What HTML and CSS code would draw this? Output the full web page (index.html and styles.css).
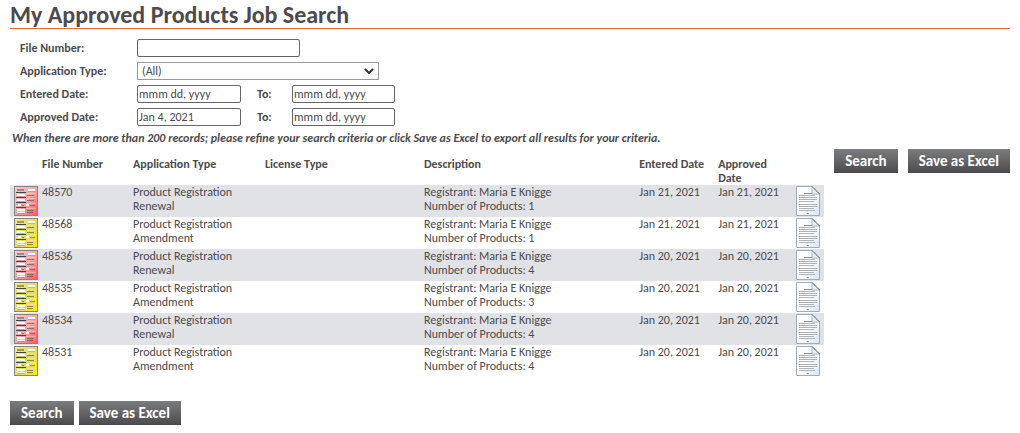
FILE: index.html
```
<!DOCTYPE html>
<html lang="en">
<head>
<meta charset="utf-8">
<title>My Approved Products Job Search</title>
<link rel="stylesheet" href="styles.css">
</head>
<body>
<svg class="defs" aria-hidden="true">
  <defs>
    <linearGradient id="red" x1="0" y1="0" x2="1" y2="1"><stop offset="0" stop-color="#f8c8c8"/><stop offset=".5" stop-color="#f0a8a8"/><stop offset="1" stop-color="#fb5c62"/></linearGradient>
    <linearGradient id="yellow" x1="0" y1="0" x2="1" y2="1"><stop offset="0" stop-color="#eeee7c"/><stop offset=".5" stop-color="#e2dc68"/><stop offset="1" stop-color="#fbe51c"/></linearGradient>
    <linearGradient id="paper" x1="0" y1="0" x2="1" y2="1"><stop offset=".5" stop-color="#fff"/><stop offset="1" stop-color="#d3e4f5"/></linearGradient>
    <symbol id="form-lines" viewBox="0 0 24 30">
      <path d="M14 4h7M3 9h8M3 14h8M4 19h3M12 19h3" stroke="#fff" stroke-width="2"/>
      <path d="M3 25h8" stroke="#fff" stroke-width="4"/>
      <path d="M14 5.500h7M3 10.500h8M3 15.500h8M3 25.500h8M3 27.500h8" stroke="#777" stroke-opacity=".35"/>
      <path d="M2 6.500h10M2 11.500h10M2 16.500h10M2 21.500h10" stroke="#222" stroke-opacity=".8"/>
      <path d="M3 4h7" stroke="#554a40" stroke-opacity=".5" stroke-width="2"/>
      <path d="M13 9.500h7M13 14.500h7M8 19.500h2M16 19.500h5M13 24.500h6M13 26.500h6" stroke="#554a40" stroke-opacity=".6"/>
      <path d="M13 7.500h9M13 12.500h9M13 17.500h9M13 22.500h9" stroke="#fff" stroke-opacity=".3"/>
    </symbol>
    <symbol id="renewal" viewBox="0 0 24 30"><rect x=".5" y=".5" width="23" height="29" fill="url(#red)" stroke="#858585"/><use href="#form-lines"/></symbol>
    <symbol id="amendment" viewBox="0 0 24 30"><rect x=".5" y=".5" width="23" height="29" fill="url(#yellow)" stroke="#858585"/><use href="#form-lines"/></symbol>
    <symbol id="document" viewBox="0 0 24 30">
      <path d="M.5 .5h15.500l7.500 7.500v21.500H.5z" fill="url(#paper)" stroke="#a0abb5"/>
      <path d="M16 .5v7.500h7.500z" fill="#e8f0f7" stroke="#a9b5c0"/>
      <path d="M16 .5l7.500 7.500" stroke="#6e7c88"/>
      <path d="M8 7.500h8" stroke="#888"/>
      <path d="M3 9.500h16M3 11.500h18M3 13.500h18M3 15.500h15M3 18.500h18M3 20.500h18M3 22.500h15M3 24.500h16" stroke="#b2b2b2"/>
      <path d="M11 27.500h2" stroke="#999"/>
    </symbol>
  </defs>
</svg>
<main class="page">
  <h1 class="title">My Approved Products Job Search</h1>
  <form class="criteria" id="criteria">
    <label for="file">File Number:</label><input class="field wide" id="file" type="text">
    <label for="type">Application Type:</label>
    <div class="select-wrap"><select class="field select" id="type"><option>(All)</option></select><svg class="chevron" viewBox="0 0 10 6" aria-hidden="true"><path d="M1 1l4 4 4-4"/></svg></div>
    <label for="entered-from">Entered Date:</label><input class="field" id="entered-from" type="text" value="mmm dd, yyyy">
    <label for="entered-to">To:</label><input class="field" id="entered-to" type="text" value="mmm dd, yyyy">
    <label for="approved-from">Approved Date:</label><input class="field" id="approved-from" type="text" value="Jan 4, 2021">
    <label for="approved-to">To:</label><input class="field" id="approved-to" type="text" value="mmm dd, yyyy">
  </form>
  <p class="note">When there are more than 200 records; please refine your search criteria or click Save as Excel to export all results for your criteria.</p>
  <div class="results">
    <table class="jobs">
      <colgroup><col class="c-icon"><col class="c-file"><col class="c-type"><col class="c-license"><col><col class="c-entered"><col class="c-approved"><col class="c-doc"></colgroup>
      <thead><tr><th></th><th>File Number</th><th>Application Type</th><th>License Type</th><th>Description</th><th>Entered Date</th><th>Approved<br>Date</th><th></th></tr></thead>
      <tbody>
        <tr><td class="job"><svg class="icon"><use href="#renewal"/></svg></td><td>48570</td><td>Product Registration<br>Renewal</td><td></td><td>Registrant: Maria E Knigge<br>Number of Products: 1</td><td>Jan 21, 2021</td><td>Jan 21, 2021</td><td><svg class="icon"><use href="#document"/></svg></td></tr>
        <tr><td class="job"><svg class="icon"><use href="#amendment"/></svg></td><td>48568</td><td>Product Registration<br>Amendment</td><td></td><td>Registrant: Maria E Knigge<br>Number of Products: 1</td><td>Jan 21, 2021</td><td>Jan 21, 2021</td><td><svg class="icon"><use href="#document"/></svg></td></tr>
        <tr><td class="job"><svg class="icon"><use href="#renewal"/></svg></td><td>48536</td><td>Product Registration<br>Renewal</td><td></td><td>Registrant: Maria E Knigge<br>Number of Products: 4</td><td>Jan 20, 2021</td><td>Jan 20, 2021</td><td><svg class="icon"><use href="#document"/></svg></td></tr>
        <tr><td class="job"><svg class="icon"><use href="#amendment"/></svg></td><td>48535</td><td>Product Registration<br>Amendment</td><td></td><td>Registrant: Maria E Knigge<br>Number of Products: 3</td><td>Jan 20, 2021</td><td>Jan 20, 2021</td><td><svg class="icon"><use href="#document"/></svg></td></tr>
        <tr><td class="job"><svg class="icon"><use href="#renewal"/></svg></td><td>48534</td><td>Product Registration<br>Renewal</td><td></td><td>Registrant: Maria E Knigge<br>Number of Products: 4</td><td>Jan 20, 2021</td><td>Jan 20, 2021</td><td><svg class="icon"><use href="#document"/></svg></td></tr>
        <tr><td class="job"><svg class="icon"><use href="#amendment"/></svg></td><td>48531</td><td>Product Registration<br>Amendment</td><td></td><td>Registrant: Maria E Knigge<br>Number of Products: 4</td><td>Jan 20, 2021</td><td>Jan 20, 2021</td><td><svg class="icon"><use href="#document"/></svg></td></tr>
      </tbody>
    </table>
    <div class="actions side"><button class="btn" type="submit" form="criteria">Search</button><button class="btn" type="button">Save as Excel</button></div>
  </div>
  <div class="actions bottom"><button class="btn" type="submit" form="criteria">Search</button><button class="btn" type="button">Save as Excel</button></div>
</main>
</body>
</html>
```
FILE: styles.css
```
* { box-sizing: border-box; }
body {
  margin: 0;
  background: #fff;
  color: #4b4b4d;
  font: 12px/14px Carlito, Lato, "Open Sans", sans-serif;
}
.defs { position: absolute; width: 0; height: 0; }
.page { padding: 0 10px; }
.title {
  margin: 0 0 7px;
  padding-top: 2px;
  border-bottom: 1px solid #e8643c;
  font-size: 24px;
  line-height: 26px;
  font-weight: 700;
}
.criteria {
  display: grid;
  grid-template-columns: 117px 104px 16px 35px 103px;
  grid-auto-rows: 23px;
  align-items: center;
  padding-left: 10px;
}
.criteria label { font-weight: 700; }
.criteria label[for$="-to"] { grid-column: 4; }
.field {
  width: 100%;
  height: 18px;
  margin: 0;
  padding: 0 1px;
  border: 1px solid #666;
  border-radius: 2px;
  background: #fff;
  color: #4b4b4d;
  font: inherit;
}
.wide { grid-column: 2 / 5; width: 163px; }
.wide + label { grid-column: 1; }
.select-wrap { grid-column: 2 / -1; position: relative; width: 242px; }
.select { display: block; padding: 0 4px; border-color: #999; border-radius: 0; appearance: none; }
.chevron {
  position: absolute;
  right: 5px;
  top: 6px;
  width: 10px;
  height: 6px;
  fill: none;
  stroke: #333;
  stroke-width: 2;
  pointer-events: none;
}
.note {
  margin: 3px 0 12px;
  padding-left: 2px;
  font-weight: 700;
  font-style: italic;
}
.results { display: flex; align-items: flex-start; gap: 10px; }
.jobs { flex: 1; min-width: 0; border-collapse: collapse; table-layout: fixed; }
.jobs th, .jobs td { padding: 0; text-align: left; vertical-align: top; white-space: nowrap; }
.jobs td { height: 32px; }
.jobs tbody tr:nth-child(odd) { background: #e1e2e6; }
.jobs .job { padding-left: 4px; }
.c-icon { width: 32px; }
.c-file { width: 91px; }
.c-type { width: 132px; }
.c-license { width: 159px; }
.c-entered { width: 79px; }
.c-approved { width: 78px; }
.c-doc { width: 28px; }
.icon { display: block; width: 24px; height: 30px; margin-top: 1px; }
.actions { display: flex; }
.side { gap: 10px; margin-top: -8px; }
.bottom { gap: 5px; margin-top: 24px; }
.btn {
  height: 24px;
  padding: 0 11px;
  border: 0;
  background: linear-gradient(#7b7c7e, #4b4b4d);
  color: #fff;
  font: 700 15px/24px Carlito, Lato, sans-serif;
  white-space: nowrap;
}
```
